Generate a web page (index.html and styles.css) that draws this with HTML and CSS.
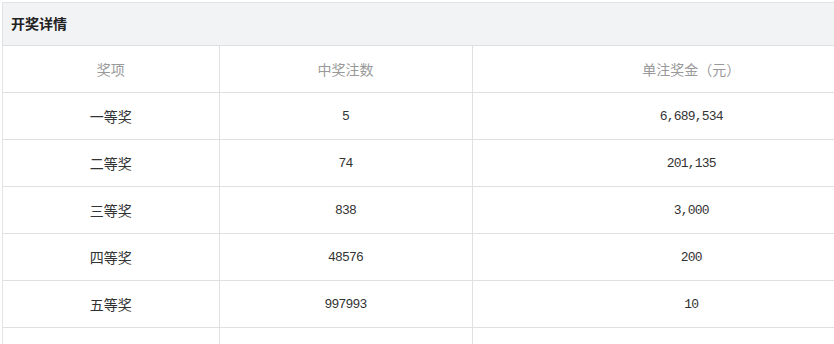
FILE: index.html
```html
<!DOCTYPE html>
<html lang="zh-CN">
<head>
<meta charset="utf-8">
<link rel="stylesheet" href="styles.css">
</head>
<body>
<div class="panel">
  <div class="panel-head">开奖详情</div>
  <table class="prize">
    <colgroup><col class="c1"><col class="c2"><col class="c3"></colgroup>
    <thead>
      <tr><th>奖项</th><th>中奖注数</th><th>单注奖金（元）</th></tr>
    </thead>
    <tbody>
      <tr><td>一等奖</td><td class="num">5</td><td class="num">6,689,534</td></tr>
      <tr><td>二等奖</td><td class="num">74</td><td class="num">201,135</td></tr>
      <tr><td>三等奖</td><td class="num">838</td><td class="num">3,000</td></tr>
      <tr><td>四等奖</td><td class="num">48576</td><td class="num">200</td></tr>
      <tr><td>五等奖</td><td class="num">997993</td><td class="num">10</td></tr>
      <tr><td>六等奖</td><td class="num">9898870</td><td class="num">5</td></tr>
    </tbody>
  </table>
</div>
</body>
</html>
```
FILE: styles.css
```css
html, body {
  margin: 0;
  padding: 0;
  background: #fff;
  overflow: hidden;
}
body {
  padding: 2px 0 0 2px;
  font-family: "Noto Sans CJK SC", "Noto Sans", sans-serif;
  color: #333;
}
.panel {
  width: 908px;
  border-left: 1px solid #e3e3e3;
  border-top: 1px solid #e3e3e3;
}
.panel-head {
  height: 42px;
  line-height: 40px;
  background: #f2f3f5;
  border-bottom: 1px solid #e0e0e0;
  padding-left: 8px;
  font-size: 14px;
  font-weight: bold;
  color: #222;
}
.prize {
  width: 100%;
  border-collapse: collapse;
  table-layout: fixed;
}
.c1 { width: 216px; }
.c2 { width: 253px; }
.prize th, .prize td {
  height: 46px;
  padding: 0;
  text-align: center;
  vertical-align: middle;
  border-bottom: 1px solid #e0e0e0;
  border-right: 1px solid #e0e0e0;
  font-size: 14px;
}
.prize th {
  font-weight: normal;
  color: #999;
}
.prize td {
  color: #333;
}
.prize td.num {
  font-family: "Liberation Mono", monospace;
  font-size: 13px;
  letter-spacing: -0.8px;
  color: #333;
}
```
